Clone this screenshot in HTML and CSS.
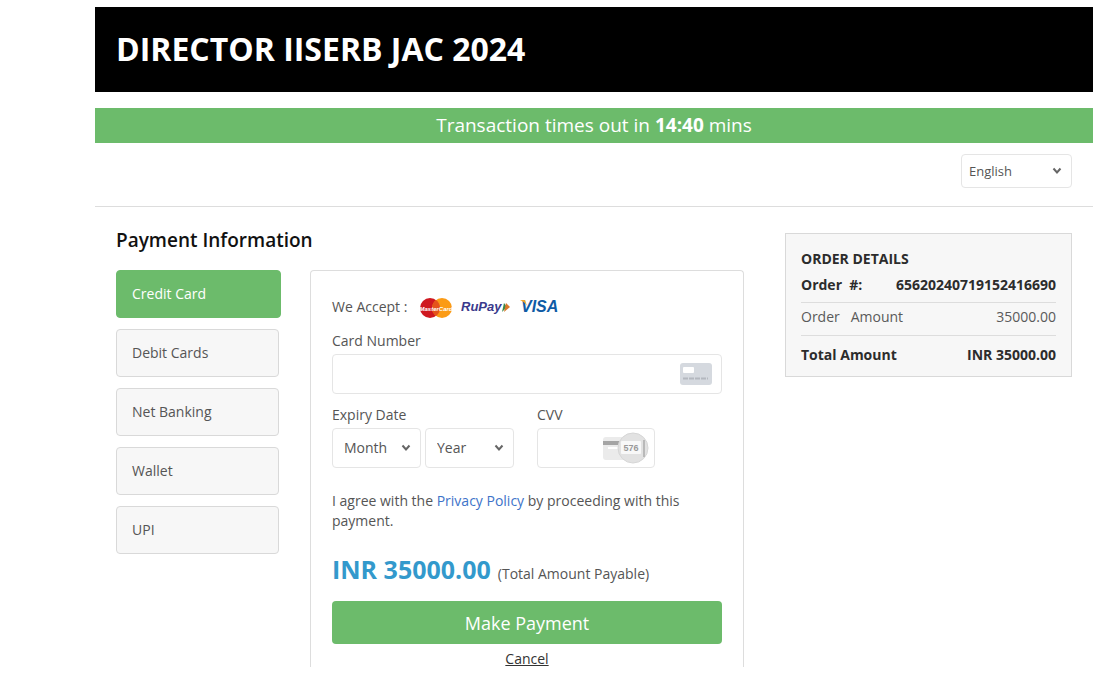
FILE: index.html
```html
<!DOCTYPE html>
<html lang="en">
<head>
    <meta charset="UTF-8">
    <meta name="viewport" content="width=device-width, initial-scale=1.0">
    <title>Payment Information</title>
    <link rel="stylesheet" href="styles.css">
</head>
<body>
    <header class="header">
        <h1>DIRECTOR IISERB JAC 2024</h1>
    </header>

    <div class="timer">Transaction times out in <strong>14:40</strong> mins</div>

    <div class="toolbar">
        <div class="select-box language">
            <select id="language" aria-label="Language">
                <option>English</option>
            </select>
            <svg class="arrow" width="10" height="8" viewBox="0 0 10 8"><path d="M1.5 1.5 L5 5.5 L8.5 1.5"/></svg>
        </div>
    </div>

    <div class="content">
        <main class="main">
            <h2>Payment Information</h2>
            <div class="payment">
                <nav class="methods">
                    <button type="button" class="method active">Credit Card</button>
                    <button type="button" class="method">Debit Cards</button>
                    <button type="button" class="method">Net Banking</button>
                    <button type="button" class="method">Wallet</button>
                    <button type="button" class="method">UPI</button>
                </nav>

                <form class="panel">
                    <div class="accept">
                        <span>We Accept :</span>
                        <svg class="logo" width="34" height="22" viewBox="0 0 34 22" role="img" aria-label="MasterCard">
                            <circle cx="11" cy="12" r="10" fill="#cf1820"/>
                            <circle cx="23" cy="12" r="10" fill="#fb9b15"/>
                            <path d="M17 4 A10 10 0 0 1 17 20 A10 10 0 0 1 17 4" fill="#e5531b"/>
                            <text x="17" y="15" text-anchor="middle" class="mastercard">MasterCard</text>
                        </svg>
                        <svg class="logo" width="50" height="18" viewBox="0 0 50 18" role="img" aria-label="RuPay">
                            <path d="M43 5 L46 9 L41 14 Z" fill="#39884a"/>
                            <path d="M45 5 L49 9 L43 14 Z" fill="#d9792b"/>
                            <text x="0" y="13" class="rupay">RuPay</text>
                        </svg>
                        <svg class="logo" width="42" height="18" viewBox="0 0 42 18" role="img" aria-label="VISA">
                            <text x="2" y="14" class="visa">VISA</text>
                            <path d="M1 2 H6 L8 8 Q6 4 1 2 Z" fill="#f0a52c"/>
                        </svg>
                    </div>

                    <label for="cardNumber">Card Number</label>
                    <div class="field">
                        <input type="text" id="cardNumber">
                        <svg class="card-icon" width="32" height="22" viewBox="0 0 32 22">
                            <rect width="32" height="22" rx="3" fill="#d5d9df"/>
                            <rect x="3" y="4" width="11" height="6" rx="1" fill="#fff"/>
                            <path d="M3 15.5 H28" stroke="#b4b8bf" stroke-width="2" stroke-dasharray="5 1"/>
                        </svg>
                    </div>

                    <div class="row">
                        <div class="expiry">
                            <label for="month">Expiry Date</label>
                            <div class="selects">
                                <div class="select-box">
                                    <select id="month">
                                        <option>Month</option>
                                    </select>
                                    <svg class="arrow" width="10" height="8" viewBox="0 0 10 8"><path d="M1.5 1.5 L5 5.5 L8.5 1.5"/></svg>
                                </div>
                                <div class="select-box">
                                    <select id="year" aria-label="Expiry year">
                                        <option>Year</option>
                                    </select>
                                    <svg class="arrow" width="10" height="8" viewBox="0 0 10 8"><path d="M1.5 1.5 L5 5.5 L8.5 1.5"/></svg>
                                </div>
                            </div>
                        </div>
                        <div class="cvv">
                            <label for="cvv">CVV</label>
                            <div class="field">
                                <input type="text" id="cvv">
                                <svg class="cvv-icon" width="48" height="32" viewBox="0 0 48 32">
                                    <rect x="1" y="5" width="34" height="23" rx="3" fill="#ebebeb"/>
                                    <rect x="1" y="9" width="20" height="4" fill="#a5a5a5"/>
                                    <rect x="6" y="15" width="12" height="2" fill="#fff"/>
                                    <circle cx="31" cy="16" r="15" fill="#e2e2e2" stroke="#d6d6d6"/>
                                    <path d="M42 8 V25" fill="none" stroke="#b9b9b9" stroke-width="2"/>
                                    <rect x="19" y="9" width="20" height="13" rx="1" fill="#f8f8f8"/>
                                    <text x="29" y="19" text-anchor="middle" class="cvv-digits">576</text>
                                </svg>
                            </div>
                        </div>
                    </div>

                    <p class="terms">I agree with the <a href="#">Privacy Policy</a> by proceeding with this payment.</p>

                    <p class="total"><strong>INR 35000.00</strong> <span>(Total Amount Payable)</span></p>

                    <button type="submit" class="pay">Make Payment</button>
                    <a href="#" class="cancel">Cancel</a>
                </form>
            </div>
        </main>

        <aside class="order">
            <h3>ORDER DETAILS</h3>
            <table>
                <tbody>
                    <tr class="number">
                        <th>Order&nbsp; #:</th>
                        <td>65620240719152416690</td>
                    </tr>
                    <tr class="amount">
                        <th>Order &nbsp; Amount</th>
                        <td>35000.00</td>
                    </tr>
                    <tr class="sum">
                        <th>Total Amount</th>
                        <td>INR 35000.00</td>
                    </tr>
                </tbody>
            </table>
        </aside>
    </div>
</body>
</html>
```

FILE: styles.css
```css
* { box-sizing: border-box; }
body { font-family: "Open Sans", "Noto Sans", sans-serif; font-size: 14px; line-height: 20px; color: #555; background: #fff; margin: 0; padding: 7px 12px 8px 95px; }
h1, h2, h3, p { margin: 0; }
input, select, button { font: inherit; color: inherit; }

.header { background: #000; color: #fff; padding: 20px 21px 21px; }
.header h1 { font-size: 32px; line-height: 44px; font-weight: bold; }
.timer { margin-top: 16px; background: #6cbb6b; color: #fff; font-size: 19px; line-height: 35px; text-align: center; }
.toolbar { display: flex; justify-content: flex-end; padding: 11px 21px 18px; border-bottom: 1px solid #ddd; }

.select-box { position: relative; width: 89px; }
.select-box select { appearance: none; display: block; width: 100%; height: 40px; padding: 0 11px; border: 1px solid #e5e5e5; border-radius: 4px; background: #fff; }
.arrow { position: absolute; right: 10px; top: 50%; margin-top: -4px; fill: none; stroke: #666; stroke-width: 2; pointer-events: none; }
.language { width: 111px; font-size: 13px; }
.language select { height: 34px; padding: 0 7px; }

.content { display: flex; align-items: flex-start; gap: 41px; padding: 0 21px; }
.main { flex: 1; padding-top: 19px; }
.main h2 { font-size: 19px; line-height: 28px; font-weight: 600; color: #111; }
.payment { display: flex; align-items: flex-start; gap: 29px; margin-top: 16px; }
.methods { display: flex; flex-direction: column; gap: 11px; width: 165px; }
.method { width: 163px; height: 48px; padding: 0 15px; text-align: left; background: #f7f7f7; border: 1px solid #d9d9d9; border-radius: 4px; cursor: pointer; }
.method.active { width: 165px; background: #6cbb6b; border-color: #6cbb6b; color: #fff; }

.panel { flex: 1; display: flex; flex-direction: column; padding: 26px 21px 0; border: 1px solid #ddd; border-bottom: none; border-radius: 4px 4px 0 0; }
.panel label { display: block; margin-bottom: 3px; }
.accept { display: flex; align-items: center; gap: 8px; height: 20px; margin-bottom: 14px; }
.accept span { margin-right: 4px; }
.mastercard { font: italic bold 6px "Liberation Sans", sans-serif; fill: #fff; }
.rupay { font: italic bold 13px "Liberation Sans", sans-serif; fill: #3a3a8c; }
.visa { font: italic bold 16px "Liberation Sans", sans-serif; fill: #0e5ba5; }

.field { position: relative; }
.field input { display: block; width: 100%; height: 40px; padding: 0 10px; border: 1px solid #e5e5e5; border-radius: 4px; background: #fff; }
.card-icon { position: absolute; right: 10px; top: 9px; }
.cvv-icon { position: absolute; right: 5px; top: 4px; }
.cvv-digits { font: bold 9px "Liberation Sans", sans-serif; fill: #999; }
.row { display: flex; gap: 23px; margin-top: 11px; }
.selects { display: flex; gap: 4px; }
.cvv { width: 118px; }

.terms { margin-top: 23px; }
.terms a { color: #3d73c9; text-decoration: none; }
.total { display: flex; align-items: baseline; gap: 7px; margin-top: 20px; }
.total strong { font-size: 25px; line-height: 36px; color: #3399cc; }
.pay { margin-top: 14px; height: 43px; border: none; border-radius: 4px; background: #6cbb6b; color: #fff; font-size: 18px; cursor: pointer; }
.cancel { align-self: center; margin-top: 6px; line-height: 17px; color: #333; }

.order { width: 287px; margin-top: 26px; padding: 15px; background: #f7f7f7; border: 1px solid #d9d9d9; color: #2c2c2c; }
.order h3 { font-size: 14px; line-height: 20px; }
.order table, .order tbody { display: block; }
.order tr { display: flex; justify-content: space-between; }
.order th, .order td { padding: 0; font-weight: bold; }
.order .number { padding: 6px 0 7px; }
.order .amount { padding: 4px 0 8px; border-top: 1px solid #ddd; border-bottom: 1px solid #ddd; color: #5a5a5a; }
.order .amount th, .order .amount td { font-weight: normal; }
.order .sum { padding-top: 9px; margin-bottom: -4px; }
```
